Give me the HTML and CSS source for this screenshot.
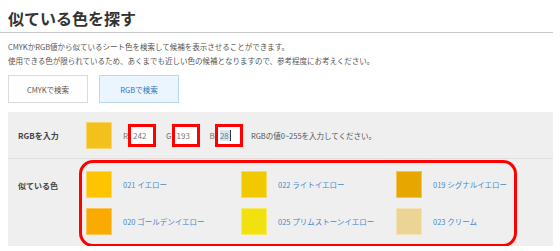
FILE: index.html
```html
<!DOCTYPE html>
<html lang="ja">
<head>
  <meta charset="UTF-8">
  <meta name="viewport" content="width=device-width,initial-scale=1">
  <title>似ている色を探す</title>
  <link rel="stylesheet" href="styles.css">
</head>
<body>

  <h2 class="page-title">似ている色を探す</h2>

  <div class="wrap">
    <p class="lead">
      CMYKかRGB値から似ているシート色を検索して候補を表示させることができます。<br>
      使用できる色が限られているため、あくまでも近しい色の候補となりますので、参考程度にお考えください。
    </p>

    <div class="tabs">
      <button class="tab">CMYKで検索</button>
      <button class="tab is-active">RGBで検索</button>
    </div>

    <div class="panel">
      <!-- 入力 -->
      <div class="row row-input">
        <div class="row-label">RGBを入力</div>
        <div class="row-body">
          <span class="swatch" style="background:rgb(242,193,28)"></span>
          <label class="field">R<input class="field-box" value="242"></label>
          <label class="field">G<input class="field-box" value="193"></label>
          <label class="field">B<span class="field-box is-selected"><span class="sel">28</span></span></label>
          <span class="help">RGBの値0~255を入力してください。</span>
        </div>
      </div>

      <!-- 結果 -->
      <div class="row row-result">
        <div class="row-label">似ている色</div>
        <div class="results">
          <a class="result" href="#"><span class="swatch" style="background:#fec400"></span>021 イエロー</a>
          <a class="result" href="#"><span class="swatch" style="background:#f1c900"></span>022 ライトイエロー</a>
          <a class="result" href="#"><span class="swatch" style="background:#e7a700"></span>019 シグナルイエロー</a>
          <a class="result" href="#"><span class="swatch" style="background:#fbaa00"></span>020 ゴールデンイエロー</a>
          <a class="result" href="#"><span class="swatch" style="background:#f1e10f"></span>025 プリムストーンイエロー</a>
          <a class="result" href="#"><span class="swatch" style="background:#ecd495"></span>023 クリーム</a>
        </div>
      </div>
    </div>
  </div>

</body>
</html>
```

FILE: styles.css
```css
*{margin:0;padding:0;box-sizing:border-box;}
body{
  font-family:"Noto Sans CJK JP","Noto Sans",sans-serif;
  color:#555; background:#fff;
}
/* 見出し */
.page-title{
  width:553px; padding:8px 0 4px 8px;
  font-size:16px; line-height:20px; font-weight:bold;
  color:#333; border-bottom:1px solid #c8c8c8;
}
.wrap{width:553px;padding-left:8px;}
.lead{
  margin-top:7px;
  font-size:7.5px; line-height:14px; color:#555;
}
/* タブ */
.tabs{display:flex;gap:11px;margin-top:7px;}
.tab{
  width:80px; height:28px;
  border:1px solid #dcdcdc; background:#fff;
  font-family:inherit; font-size:7.5px; color:#555;
}
.tab.is-active{
  background:#ebf5fe; border-color:#bcd8ef; color:#2f73c0;
}
/* パネル */
.panel{margin-top:9px;background:#efefef;}
.row{display:flex;}
.row-label{
  width:78px; padding-left:10px; flex-shrink:0;
  font-size:8px; font-weight:bold; color:#444;
}
.row-input{
  height:47px; align-items:center;
  border-bottom:1px solid #e2e2e2;
}
.row-body{display:flex;align-items:center;}
.swatch{
  display:block; width:26px; height:27px; flex-shrink:0;
  border:1px solid rgba(255,255,255,0.35);
}
.row-body .swatch{margin-right:11px;}
.field{
  display:flex; align-items:center;
  font-size:8px; color:#777; margin-right:10px;
}
.field-box{
  display:block; width:28px; height:23px;
  border:3px solid #f00; background:#fff;
  font-family:inherit; font-size:8px; color:#777;
  padding:0 2px; line-height:17px; outline:none;
}
.sel{background:#d5e6f8;padding-right:1px;border-right:1px solid #333;}
.help{font-size:7.5px;color:#555;margin-left:-2px;}
/* 結果 */
.row-result{padding-top:1px;}
.row-result .row-label{width:71px;padding-top:20px;}
.results{
  width:438px; margin-bottom:-1px;
  display:grid; grid-template-columns:155px 155px 1fr; row-gap:10px;
  border:3px solid #f00; border-radius:14px;
  padding:8px 3px 9px 4px;
}
.result{
  display:flex; align-items:center; gap:11px;
  font-size:7.5px; color:#4a87cc; text-decoration:none; white-space:nowrap;
}
```
